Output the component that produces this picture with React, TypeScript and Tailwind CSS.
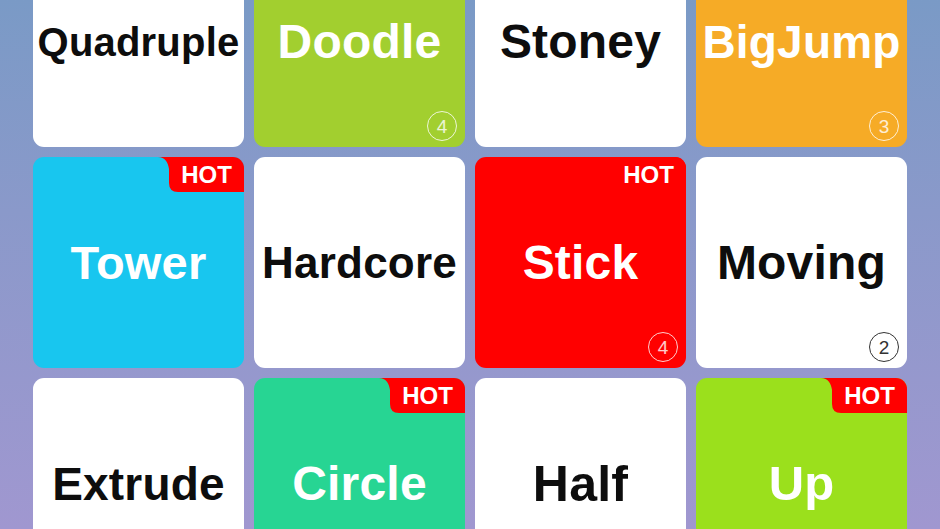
import React from "react";

type Level = {
  name: string;
  bg: string;
  dark: boolean;
  size: string;
  hot?: boolean;
  count?: string;
};

const levels: Level[] = [
  { name: "Quadruple", bg: "bg-white", dark: true, size: "text-[40px]" },
  { name: "Doodle", bg: "bg-[#a2cf2f]", dark: false, size: "text-[48px]", count: "4" },
  { name: "Stoney", bg: "bg-white", dark: true, size: "text-[48px]" },
  { name: "BigJump", bg: "bg-[#f6ab26]", dark: false, size: "text-[46px]", count: "3" },
  { name: "Tower", bg: "bg-[#18c6ef]", dark: false, size: "text-[47px]", hot: true },
  { name: "Hardcore", bg: "bg-white", dark: true, size: "text-[44px]" },
  { name: "Stick", bg: "bg-[#ff0000]", dark: false, size: "text-[48px]", hot: true, count: "4" },
  { name: "Moving", bg: "bg-white", dark: true, size: "text-[48px]", count: "2" },
  { name: "Extrude", bg: "bg-white", dark: true, size: "text-[46px]" },
  { name: "Circle", bg: "bg-[#27d593]", dark: false, size: "text-[48px]", hot: true },
  { name: "Half", bg: "bg-white", dark: true, size: "text-[50px]" },
  { name: "Up", bg: "bg-[#9be01c]", dark: false, size: "text-[49px]", hot: true },
];

// red tab in the top-right corner
const HotBadge = () => (
  <div className="absolute top-0 right-0 w-[86px] h-[35px]">
    <svg className="absolute inset-0" width="86" height="35" viewBox="0 0 86 35">
      <path d="M0 0 C7 0 10 5 11 12 L11 26 Q11 35 20 35 L86 35 L86 0 Z" fill="#ff0000" />
    </svg>
    <div className="relative h-full pl-[11px] flex items-center justify-center text-white font-bold text-[24px] leading-none">
      HOT
    </div>
  </div>
);

const Count = ({ n, dark }: { n: string; dark: boolean }) => (
  <div
    className={
      "absolute right-[8px] bottom-[6px] w-[30px] h-[30px] rounded-full border-[1.5px] flex items-center justify-center text-[19px] leading-none " +
      (dark ? "border-[#333] text-[#333]" : "border-white/80 text-white/80")
    }
  >
    {n}
  </div>
);

export default function App() {
  return (
    <div
      className="w-[940px] h-[529px] overflow-hidden bg-gradient-to-b from-[#7a9ac6] to-[#a097d0]"
      style={{ fontFamily: '"Liberation Sans", Arial, sans-serif' }}
    >
      <div className="-mt-[64px] px-[33px] grid grid-cols-4 gap-[10px]">
        {levels.map((lv) => (
          <div
            key={lv.name}
            className={
              "relative h-[211px] rounded-[11px] overflow-hidden flex items-center justify-center " + lv.bg
            }
          >
            <span
              className={
                "font-bold leading-none tracking-[0.2px] " +
                lv.size +
                " " +
                (lv.dark ? "text-[#0d0d0d]" : "text-white")
              }
            >
              {lv.name}
            </span>
            {lv.hot && <HotBadge />}
            {lv.count && <Count n={lv.count} dark={lv.dark} />}
          </div>
        ))}
      </div>
    </div>
  );
}
